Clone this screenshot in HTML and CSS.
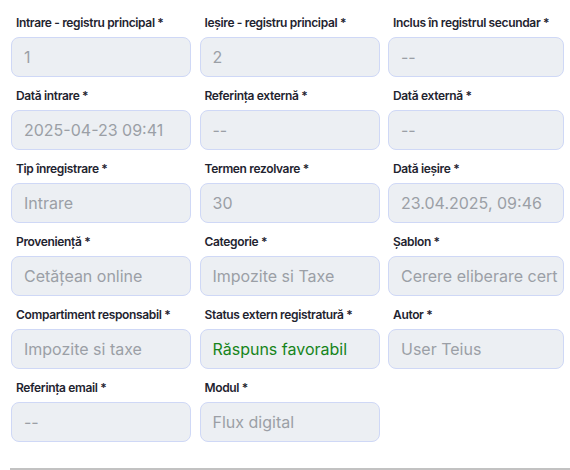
FILE: index.html
```html
<!DOCTYPE html>
<html lang="ro">
<head>
<meta charset="utf-8">
<title>Registru</title>
<link rel="stylesheet" href="styles.css">
</head>
<body>
<div class="form">
  <div class="grid">
    <div class="field"><label class="label">Intrare - registru principal *</label><input class="input" readonly value="1"></div>
    <div class="field"><label class="label">Ieșire - registru principal *</label><input class="input" readonly value="2"></div>
    <div class="field"><label class="label">Inclus în registrul secundar *</label><input class="input" readonly value="--"></div>

    <div class="field"><label class="label">Dată intrare *</label><input class="input" readonly value="2025-04-23 09:41"></div>
    <div class="field"><label class="label">Referința externă *</label><input class="input" readonly value="--"></div>
    <div class="field"><label class="label">Dată externă *</label><input class="input" readonly value="--"></div>

    <div class="field"><label class="label">Tip înregistrare *</label><input class="input" readonly value="Intrare"></div>
    <div class="field"><label class="label">Termen rezolvare *</label><input class="input" readonly value="30"></div>
    <div class="field"><label class="label">Dată ieșire *</label><input class="input" readonly value="23.04.2025, 09:46"></div>

    <div class="field"><label class="label">Proveniență *</label><input class="input" readonly value="Cetățean online"></div>
    <div class="field"><label class="label">Categorie *</label><input class="input" readonly value="Impozite si Taxe"></div>
    <div class="field"><label class="label">Șablon *</label><input class="input" readonly value="Cerere eliberare certificat fiscal"></div>

    <div class="field"><label class="label">Compartiment responsabil *</label><input class="input" readonly value="Impozite si taxe"></div>
    <div class="field"><label class="label">Status extern registratură *</label><input class="input input-green" readonly value="Răspuns favorabil"></div>
    <div class="field"><label class="label">Autor *</label><input class="input" readonly value="User Teius"></div>

    <div class="field"><label class="label">Referința email *</label><input class="input" readonly value="--"></div>
    <div class="field"><label class="label">Modul *</label><input class="input" readonly value="Flux digital"></div>
  </div>
  <div class="divider"></div>
</div>
</body>
</html>
```

FILE: styles.css
```css
html, body {
  margin: 0;
  padding: 0;
  background: #ffffff;
  font-family: Inter, "Noto Sans", sans-serif;
}

.form {
  padding: 14px 0 0 11px;
}

.grid {
  display: grid;
  grid-template-columns: 180px 180px 176px;
  column-gap: 8.5px;
  row-gap: 10px;
}

.field {
  display: flex;
  flex-direction: column;
}

.label {
  display: block;
  font-size: 12px;
  line-height: 16px;
  font-weight: 600;
  letter-spacing: -0.35px;
  color: #1f2430;
  padding-left: 5px;
  margin-top: 1px;
  margin-bottom: 6px;
  white-space: nowrap;
}

.input {
  box-sizing: border-box;
  width: 100%;
  height: 40px;
  margin: 0;
  padding: 0 5px 0 12px;
  border: 1px solid #cfd8f6;
  border-radius: 8px;
  background: #eceff3;
  color: #9b9fa6;
  font-family: Inter, "Noto Sans", sans-serif;
  font-size: 16px;
  outline: none;
}

.input-green {
  color: #16841a;
}

.divider {
  margin-top: 26px;
  margin-left: -1px;
  height: 2px;
  background: #c2c2c2;
}
```
